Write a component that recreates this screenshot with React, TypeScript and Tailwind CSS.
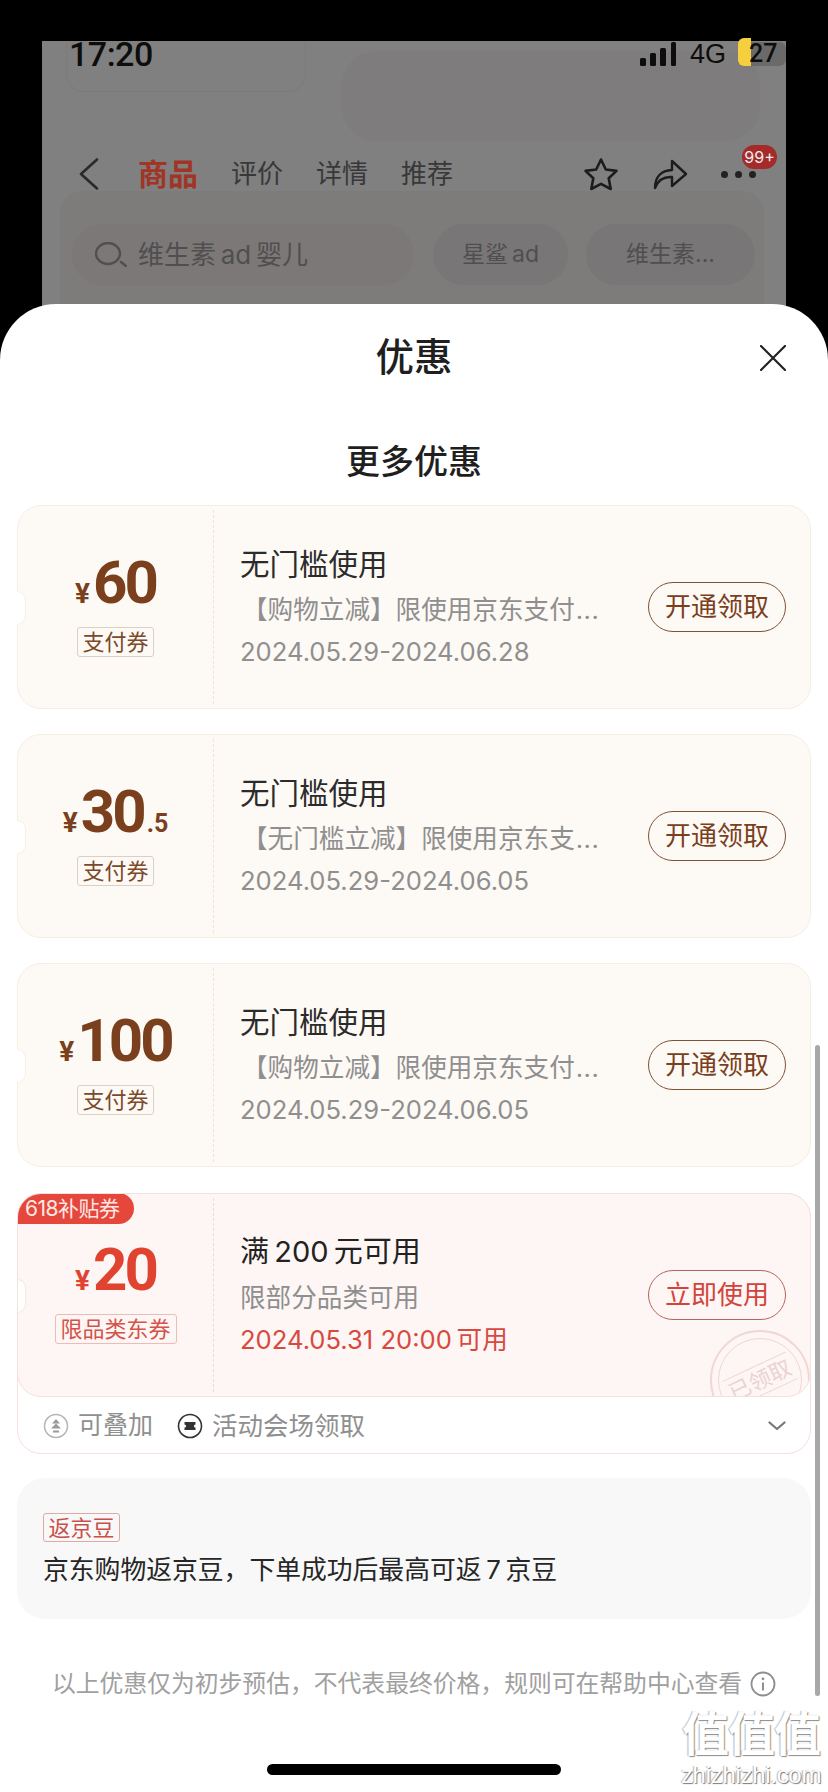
const rootFont = "font-['Inter','Noto_Sans_CJK_SC',sans-serif]";

type Coupon = {
  yen: string;
  small?: string;
  tag: string;
  title: string;
  sub: string;
  date: string;
  action: string;
};

const coupons: Coupon[] = [
  { yen: "60", tag: "支付券", title: "无门槛使用", sub: "【购物立减】限使用京东支付", date: "2024.05.29-2024.06.28", action: "开通领取" },
  { yen: "30", small: ".5", tag: "支付券", title: "无门槛使用", sub: "【无门槛立减】限使用京东支", date: "2024.05.29-2024.06.05", action: "开通领取" },
  { yen: "100", tag: "支付券", title: "无门槛使用", sub: "【购物立减】限使用京东支付", date: "2024.05.29-2024.06.05", action: "开通领取" },
];

function Notch({ red }: { red?: boolean }) {
  return (
    <div
      className={`absolute left-[-1px] top-[85px] h-[34px] w-[9px] rounded-r-[9px] border border-l-0 bg-white ${
        red ? "border-[#f8e6e3]" : "border-[#f7efe5]"
      }`}
    />
  );
}

function Price({ yen, small, color }: { yen: string; small?: string; color: string }) {
  return (
    <div className={`flex h-[60px] items-baseline justify-center font-['Roboto',sans-serif] font-bold ${color}`}>
      <span className="mr-[3px] text-[28px] leading-none">¥</span>
      <span className="text-[60px] leading-[60px] tracking-[-3px]">{yen}</span>
      {small && <span className="ml-[3px] text-[25px] leading-none">{small}</span>}
    </div>
  );
}

function CouponCard({ c }: { c: Coupon }) {
  return (
    <div className="relative flex h-[204px] rounded-[24px] border border-[#f6eee3] bg-[#fdf9f5]">
      <Notch />
      <div className="flex w-[195px] shrink-0 flex-col items-center pt-[47px]">
        <Price yen={c.yen} small={c.small} color="text-[#7a3f1c]" />
        <div className="mt-[14px] flex h-[30px] w-[77px] items-center justify-center rounded-[3px] border border-[#dccfc3] text-[22px] leading-none text-[#7a4a2a]">
          {c.tag}
        </div>
      </div>
      <div className="my-[4px] border-l border-dashed border-[#f3e2d0]" />
      <div className="flex min-w-0 flex-1 items-start pl-[26px]">
        <div className="w-[362px] shrink-0 pt-[38px]">
          <div className="h-[40px] text-[29.5px] leading-[40px] text-[#2b2b2b]">{c.title}</div>
          <div className="mt-[6px] h-[40px] whitespace-nowrap pl-[2px] text-[25.6px] leading-[40px] text-[#8f8f8f]">
            {c.sub}
            <span className="ml-[1px] tracking-[0.5px]">...</span>
          </div>
          <div className="mt-[2px] h-[40px] text-[25.6px] leading-[40px] text-[#8f8f8f]">{c.date}</div>
        </div>
        <div className="mt-[76px] ml-[46px] flex h-[50px] w-[138px] shrink-0 items-center justify-center rounded-full border-[1.5px] border-[#7d5236] text-[26px] leading-none text-[#7a3f1c]">
          {c.action}
        </div>
      </div>
    </div>
  );
}

function Stamp() {
  return (
    <div className="absolute left-[692px] top-[136px] flex h-[100px] w-[100px] items-center justify-center rounded-full border-[2px] border-[#f0d6d4]">
      <div className="flex h-[84px] w-[84px] items-center justify-center rounded-full border border-[#f0d6d4]">
        <div className="rotate-[-25deg] border-y border-[#f0d6d4] px-[2px] text-[22px] leading-[28px] text-[#ecd2d0]">已领取</div>
      </div>
    </div>
  );
}

function RedCard() {
  return (
    <div className="mt-[1px] rounded-[24px] border border-[#f6dfdd] bg-white">
      <div className="relative -m-px flex h-[204px] overflow-hidden rounded-[24px] border border-[#f6e0dc] bg-[#fdf6f4]">
        <Notch red />
        <div className="absolute left-[-1px] top-[-1px] flex h-[31px] w-[117px] items-center rounded-r-full rounded-tl-[20px] bg-[#e5473c] pl-[8px] text-[21px] leading-none tracking-[-0.5px] text-[#fde8e4]">
          618补贴券
        </div>
        <div className="flex w-[195px] shrink-0 flex-col items-center pt-[46px]">
          <Price yen="20" color="text-[#e0432f]" />
          <div className="mt-[14px] flex h-[30px] w-[122px] items-center justify-center rounded-[3px] border border-[#ecbdb6] text-[22px] leading-none text-[#d4534a]">
            限品类东券
          </div>
        </div>
        <div className="my-[4px] border-l border-dashed border-[#eadbd8]" />
        <div className="flex min-w-0 flex-1 items-start pl-[26px]">
          <div className="w-[362px] shrink-0 pt-[38px]">
            <div className="h-[40px] text-[29px] leading-[40px] text-[#222222]">{"满\u2009200\u2009元可用"}</div>
            <div className="mt-[6px] h-[40px] text-[25.6px] leading-[40px] text-[#8f8f8f]">限部分品类可用</div>
            <div className="mt-[2px] h-[40px] text-[25.6px] leading-[40px] text-[#d8493e]">{"2024.05.31 20:00\u2009可用"}</div>
          </div>
          <div className="mt-[76px] ml-[46px] flex h-[50px] w-[138px] shrink-0 items-center justify-center rounded-full border-[1.5px] border-[#b9635c] text-[26px] leading-none text-[#d2443a]">
            立即使用
          </div>
        </div>
        <Stamp />
      </div>
      <div className="flex h-[57px] items-center pl-[25px] pr-[24px] pt-[2px] text-[25px] leading-none text-[#8f8f8f]">
        <svg width="26" height="26" viewBox="0 0 26 26" fill="none">
          <circle cx="13" cy="13" r="11.5" stroke="#b5b5b5" strokeWidth="1.5" />
          <path d="M13 6l-4 4.5h8zM13 10.5l-5 5h10zM10 17.5h6v2h-6z" fill="#9a9a9a" />
        </svg>
        <span className="ml-[9px]">可叠加</span>
        <svg className="ml-[24px]" width="26" height="26" viewBox="0 0 26 26" fill="none">
          <circle cx="13" cy="13" r="11.5" stroke="#333333" strokeWidth="1.6" />
          <path d="M7.5 9h11v2.4a1.6 1.6 0 0 0 0 3.2V17h-11v-2.4a1.6 1.6 0 0 0 0-3.2z" fill="#333333" />
        </svg>
        <span className="ml-[9px] text-[25.5px]">活动会场领取</span>
        <svg className="ml-auto" width="18" height="10" viewBox="0 0 18 10" fill="none">
          <path d="M1.5 1.5L9 8l7.5-6.5" stroke="#777777" strokeWidth="2.2" strokeLinecap="round" strokeLinejoin="round" />
        </svg>
      </div>
    </div>
  );
}

function TopBar() {
  return (
    <div className="relative mx-[42px] h-[329px] bg-[#808080]">
      {/* blurred page behind the dim layer */}
      <div className="absolute left-[24px] top-0 h-[51px] w-[240px] rounded-b-[18px] border border-t-0 border-[#7b7b7b]" />
      <div className="absolute left-[300px] top-[10px] h-[90px] w-[418px] rounded-[34px] bg-[#7e7c7c]" />
      <div className="absolute left-[18px] top-[150px] h-[179px] w-[704px] rounded-[22px] bg-[#7e7b7b]" />

      <div className="relative flex h-[26px] items-center pl-[27px]">
        <span className="font-['Roboto',sans-serif] text-[34px] font-medium leading-none tracking-[-0.5px] text-[#0d0d0d]">17:20</span>
        <svg className="ml-auto" width="37" height="24" viewBox="0 0 37 24" fill="#0d0d0d">
          <rect x="0" y="16" width="6" height="8" rx="1.5" />
          <rect x="10" y="11" width="6" height="13" rx="1.5" />
          <rect x="20" y="6" width="6" height="18" rx="1.5" />
          <rect x="31" y="0" width="5" height="24" rx="1.5" />
        </svg>
        <span className="ml-[13px] font-['Liberation_Sans',sans-serif] text-[27px] leading-none text-[#0d0d0d]">4G</span>
        <div className="relative ml-[12px] h-[24px] w-[48px]">
          <div className="absolute inset-0 rounded-[7px] bg-[#6a6a6a]" />
          <div className="absolute left-0 top-[-4px] h-[28px] w-[13px] rounded-l-[6px] bg-[#f5cf3e]" />
          <span className="absolute left-[11px] top-0 font-['Roboto',sans-serif] text-[25px] font-medium leading-[24px] text-[#0d0d0d]">27</span>
        </div>
      </div>

      <div className="relative mt-[87px] flex h-[40px] items-center">
        <svg className="ml-[36px]" width="22" height="32" viewBox="0 0 22 32" fill="none">
          <path d="M19 1.5L3 16l16 14.5" stroke="#2a2a2a" strokeWidth="2.6" strokeLinecap="round" strokeLinejoin="round" />
        </svg>
        <span className="ml-[38px] text-[30px] font-bold leading-none text-[#a03526]">商品</span>
        <span className="ml-[33px] text-[26px] leading-none text-[#383838]">评价</span>
        <span className="ml-[33px] text-[26px] leading-none text-[#383838]">详情</span>
        <span className="ml-[33px] text-[26px] leading-none text-[#383838]">推荐</span>
        <svg className="ml-[130px]" width="36" height="34" viewBox="0 0 36 34" fill="none">
          <path d="M18 2.5l4.8 10 10.7 1.4-7.8 7.4 2 10.7-9.7-5.2-9.7 5.2 2-10.7-7.8-7.4 10.7-1.4z" stroke="#1c1c1c" strokeWidth="2.6" strokeLinejoin="round" />
        </svg>
        <svg className="ml-[33px]" width="36" height="32" viewBox="0 0 36 32" fill="none">
          <path d="M3 30C3 19 9 12.5 20 12V3l14 13-14 12v-9C12 18.5 6 22 3 30z" stroke="#1c1c1c" strokeWidth="2.4" strokeLinejoin="round" />
        </svg>
        <div className="ml-[33px] flex gap-[7px]">
          <span className="h-[7px] w-[7px] rounded-full bg-[#222222]" />
          <span className="h-[7px] w-[7px] rounded-full bg-[#222222]" />
          <span className="h-[7px] w-[7px] rounded-full bg-[#222222]" />
        </div>
        <div className="absolute left-[700px] top-[-9px] flex h-[24px] w-[35px] items-center justify-center rounded-full bg-[#a52a2a] text-[16px] leading-none text-[#eeeeee]">
          99+
        </div>
      </div>

      <div className="relative mt-[30px] flex h-[61px] pl-[30px]">
        <div className="flex w-[342px] items-center rounded-full bg-[#7c7878] pl-[23px]">
          <svg width="32" height="25" viewBox="0 0 32 25" fill="none">
            <ellipse cx="13" cy="11.5" rx="12" ry="10.5" stroke="#505050" strokeWidth="2.4" />
            <path d="M26 20l5 4" stroke="#505050" strokeWidth="2.4" strokeLinecap="round" />
          </svg>
          <span className="ml-[11px] text-[26px] leading-none text-[#4f4f4f]">{"维生素\u2009ad\u2009婴儿"}</span>
        </div>
        <div className="ml-[19px] flex w-[135px] items-center justify-center rounded-full bg-[#787676] text-[23px] leading-none text-[#4f4f4f]">
          {"星鲨\u2009ad"}
        </div>
        <div className="ml-[18px] flex w-[169px] items-center justify-center rounded-full bg-[#787676] text-[23px] leading-none text-[#4f4f4f]">
          维生素...
        </div>
      </div>
    </div>
  );
}

export default function App() {
  return (
    <div className={`relative h-[1792px] w-[828px] overflow-hidden bg-black pt-[41px] ${rootFont}`}>
      <TopBar />
      <div className="relative -mt-[66px] h-[1488px] rounded-t-[56px] bg-white px-[17px]">
        <div className="relative flex h-[106px] items-center justify-center text-[38.5px] font-medium leading-none text-[#1f1f1f]">
          优惠
          <svg className="absolute right-[25px] top-[41px]" width="26" height="26" viewBox="0 0 26 26" fill="none">
            <path d="M1 1l24 24M25 1L1 25" stroke="#222222" strokeWidth="2.2" strokeLinecap="round" />
          </svg>
        </div>
        <div className="mt-[9px] flex h-[86px] items-start justify-center pt-[21px] text-[34px] font-medium leading-[44px] text-[#1f1f1f]">
          更多优惠
        </div>
        <div className="flex flex-col gap-[25px]">
          {coupons.map((c, i) => (
            <CouponCard key={i} c={c} />
          ))}
          <RedCard />
        </div>
        <div className="mt-[24px] h-[141px] rounded-[28px] bg-[#f8f8f8] pl-[26px] pt-[35px]">
          <div className="flex h-[29px] w-[77px] items-center justify-center rounded-[3px] border border-[#e2a9a3] text-[22px] leading-none text-[#c9504a]">
            返京豆
          </div>
          <div className="mt-[13px] text-[25.8px] leading-[30px] text-[#262626]">{"京东购物返京豆，下单成功后最高可返\u20097\u2009京豆"}</div>
        </div>
        <div className="mt-[50px] flex h-[30px] items-center pl-[35px] text-[23.8px] leading-none text-[#a0a0a0]">
          以上优惠仅为初步预估，不代表最终价格，规则可在帮助中心查看
          <svg className="ml-[8px]" width="26" height="26" viewBox="0 0 26 26" fill="none">
            <circle cx="13" cy="13" r="11.5" stroke="#8e8e8e" strokeWidth="1.8" />
            <circle cx="13" cy="7.8" r="1.4" fill="#8e8e8e" />
            <path d="M13 11.5v8" stroke="#8e8e8e" strokeWidth="2" />
          </svg>
        </div>
        {/* scrollbar */}
        <div className="absolute left-[815px] top-[741px] h-[651px] w-[5px] rounded-full bg-[#a8a8a8]" />
      </div>
      {/* home indicator */}
      <div className="absolute left-[267px] top-[1764px] h-[11px] w-[294px] rounded-full bg-black" />
      {/* watermark */}
      <div className="absolute left-[680px] top-[1704px] flex w-[142px] flex-col items-center text-white">
        <div className="text-[47px] font-bold leading-[60px] tracking-[-1px] [text-shadow:1px_1px_1px_#8a8a8a,-1px_0_1px_#b8b8b8]">值值值</div>
        <div className="font-['Liberation_Sans',sans-serif] text-[24px] leading-[22px] tracking-[-0.3px] [text-shadow:1px_1px_1px_#7a7a7a,-1px_0_1px_#b8b8b8]">zhizhizhi.com</div>
      </div>
    </div>
  );
}
